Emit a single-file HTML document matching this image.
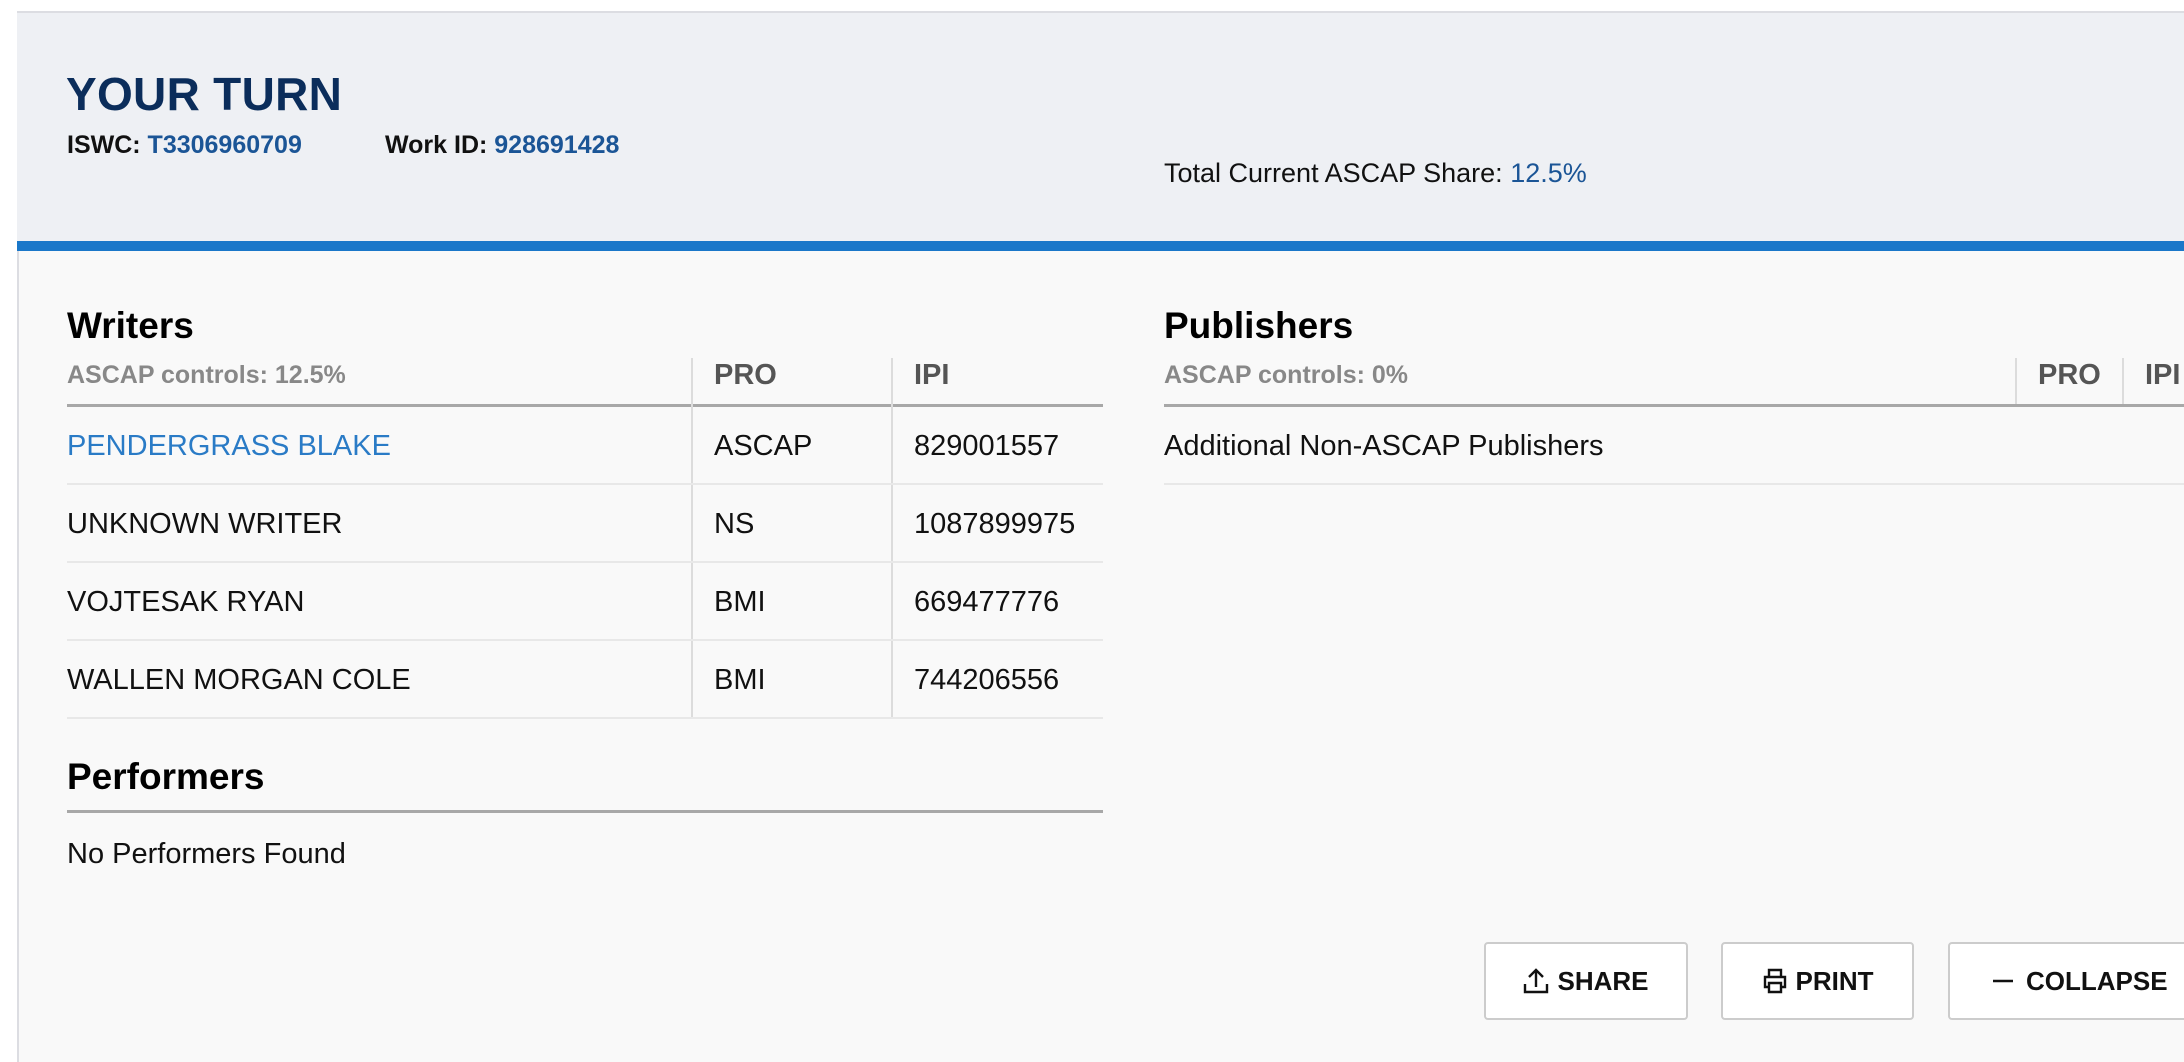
<!DOCTYPE html>
<html><head><meta charset="utf-8"><style>
*{margin:0;padding:0;box-sizing:border-box}
html,body{width:2184px;height:1062px;overflow:hidden}
body{background:#fff;font-family:"Liberation Sans",sans-serif;position:relative;color:#111}
.a{position:absolute;white-space:nowrap}
.card{position:absolute;left:17px;top:11px;width:2167px;height:1051px;border:2px solid #dcdde2;border-right:none;border-bottom:none;background:#f9f9f9}
.hdr{position:absolute;left:17px;top:13px;width:2167px;height:228px;background:#eef0f4}
.bar{position:absolute;left:17px;top:241px;width:2167px;height:10px;background:#1a77c9}
.h2{font-weight:bold;font-size:37px;color:#000}
.sub{font-weight:bold;font-size:25px;color:#888}
.th{font-weight:bold;font-size:29px;color:#555}
.td{font-size:29px;color:#111}
.hl{position:absolute;height:3px;background:#a8a8a8}
.rl{position:absolute;height:2px;background:#e8e8e8}
.vl{position:absolute;width:2px;background:#dcdcdc}
.btn{position:absolute;top:942px;height:78px;border:2px solid #ccc;border-radius:4px;background:#fff;display:flex;align-items:center;justify-content:center;font-weight:bold;font-size:26px;color:#111;gap:8px}
</style></head><body>
<div class="card"></div>
<div class="hdr"></div>
<div class="bar"></div>
<div class="a" style="left:66px;top:67px;font-size:46px;font-weight:bold;color:#0b2d5b;letter-spacing:0.3px">YOUR TURN</div>
<div class="a" style="left:67px;top:131px;font-size:25px;font-weight:bold">ISWC: <span style="color:#1b5596">T3306960709</span></div>
<div class="a" style="left:385px;top:131px;font-size:25px;font-weight:bold">Work ID: <span style="color:#1b5596">928691428</span></div>
<div class="a" style="left:1164px;top:158px;font-size:27px">Total Current ASCAP Share: <span style="color:#1b5596">12.5%</span></div>

<div class="a h2" style="left:67px;top:305px">Writers</div>
<div class="a sub" style="left:67px;top:361px">ASCAP controls: 12.5%</div>
<div class="a th" style="left:714px;top:359px">PRO</div>
<div class="a th" style="left:914px;top:359px">IPI</div>
<div class="hl" style="left:67px;top:404px;width:1036px"></div>
<div class="vl" style="left:691px;top:358px;height:360px"></div>
<div class="vl" style="left:891px;top:358px;height:360px"></div>
<div class="a td" style="left:67px;top:430px;color:#2a7bc6">PENDERGRASS BLAKE</div>
<div class="a td" style="left:714px;top:430px">ASCAP</div>
<div class="a td" style="left:914px;top:430px">829001557</div>
<div class="rl" style="left:67px;top:483px;width:1036px"></div>
<div class="a td" style="left:67px;top:508px">UNKNOWN WRITER</div>
<div class="a td" style="left:714px;top:508px">NS</div>
<div class="a td" style="left:914px;top:508px">1087899975</div>
<div class="rl" style="left:67px;top:561px;width:1036px"></div>
<div class="a td" style="left:67px;top:586px">VOJTESAK RYAN</div>
<div class="a td" style="left:714px;top:586px">BMI</div>
<div class="a td" style="left:914px;top:586px">669477776</div>
<div class="rl" style="left:67px;top:639px;width:1036px"></div>
<div class="a td" style="left:67px;top:664px">WALLEN MORGAN COLE</div>
<div class="a td" style="left:714px;top:664px">BMI</div>
<div class="a td" style="left:914px;top:664px">744206556</div>
<div class="rl" style="left:67px;top:717px;width:1036px"></div>

<div class="a h2" style="left:67px;top:756px">Performers</div>
<div class="hl" style="left:67px;top:810px;width:1036px"></div>
<div class="a td" style="left:67px;top:838px">No Performers Found</div>

<div class="a h2" style="left:1164px;top:305px">Publishers</div>
<div class="a sub" style="left:1164px;top:361px">ASCAP controls: 0%</div>
<div class="a th" style="left:2038px;top:359px">PRO</div>
<div class="a th" style="left:2145px;top:359px">IPI</div>
<div class="hl" style="left:1164px;top:404px;width:1020px"></div>
<div class="vl" style="left:2015px;top:358px;height:46px"></div>
<div class="vl" style="left:2122px;top:358px;height:46px"></div>
<div class="a td" style="left:1164px;top:430px">Additional Non-ASCAP Publishers</div>
<div class="rl" style="left:1164px;top:483px;width:1020px"></div>

<div class="btn" style="left:1484px;width:204px"><svg width="26" height="28" viewBox="0 0 26 28" fill="none" stroke="#111" stroke-width="2.4"><path d="M13 20V3M6 10l7-7 7 7M2 17v8h22v-8"/></svg>SHARE</div>
<div class="btn" style="left:1721px;width:193px"><svg width="26" height="28" viewBox="0 0 26 28" fill="none" stroke="#111" stroke-width="2.4"><path d="M7 10V3h12v7M7 20H3V10h20v10h-4M7 16h12v9H7z"/></svg>PRINT</div>
<div class="btn" style="left:1948px;width:260px;justify-content:flex-start;padding-left:42px;gap:12px"><svg width="22" height="6" viewBox="0 0 22 6"><path d="M1 3h20" stroke="#111" stroke-width="2.6"/></svg>COLLAPSE</div>
</body></html>
